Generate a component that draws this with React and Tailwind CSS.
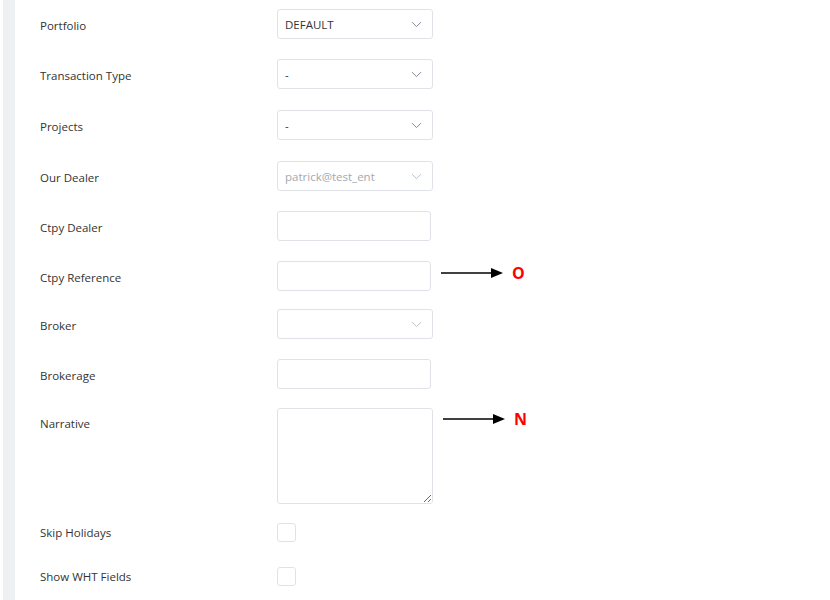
import { ChevronDown } from 'lucide-react';

const labelCls = 'w-[237px] shrink-0 text-[11.5px] text-[#333]';

const Select = ({ value, muted }) => (
  <div className="w-[156px] h-[30px] border border-[#dfe3e8] rounded-[3px] bg-white flex items-center justify-between pl-[7px] pr-[7px]">
    <span className={muted ? 'text-[11.5px] text-[#a3a9b0] translate-y-[1px]' : 'text-[11.5px] text-[#333] translate-y-[1px]'}>{value}</span>
    <ChevronDown size={17} strokeWidth={1.4} className={muted ? 'text-[#b8c0c8]' : 'text-[#7d8a98]'} />
  </div>
);

const Input = () => (
  <div className="w-[154px] h-[30px] border border-[#dfe3e8] rounded-[3px] bg-white" />
);

const Checkbox = () => (
  <div className="w-[19px] h-[19px] border border-[#dfe3e8] rounded-[3px] bg-white" />
);

const Marker = ({ letter, className }) => (
  <div className={'flex items-center ml-[10px] ' + (className || '')}>
    <svg width="62" height="12" viewBox="0 0 62 12">
      <line x1="0" y1="6" x2="52" y2="6" stroke="#000" strokeWidth="1.5" />
      <polygon points="50,1 62,6 50,11" fill="#000" />
    </svg>
    <span className="ml-[9px] text-[16px] font-bold text-[#ff0000] leading-none">{letter}</span>
  </div>
);

const Row = ({ label, children, className, flat }) => (
  <div className={'flex items-center ' + (className || '')}>
    <div className={flat ? labelCls : labelCls + ' translate-y-[2px]'}>{label}</div>
    {children}
  </div>
);

export default function App() {
  return (
    <div className="flex w-full h-[600px] bg-white overflow-hidden" style={{ fontFamily: '"Open Sans", "Liberation Sans", sans-serif' }}>
      <div className="ml-[3px] w-[12px] shrink-0 bg-[#eef1f4]" />
      <div className="pl-[25px] pt-[9px] flex flex-col">
        <Row label="Portfolio"><Select value="DEFAULT" /></Row>
        <Row label="Transaction Type" className="mt-[20px]"><Select value="-" /></Row>
        <Row label="Projects" className="mt-[21px]"><Select value="-" /></Row>
        <Row label="Our Dealer" className="mt-[21px]"><Select value="patrick@test_ent" muted /></Row>
        <Row label="Ctpy Dealer" className="mt-[20px]"><Input /></Row>
        <Row label="Ctpy Reference" className="mt-[20px]"><Input /><Marker letter="O" className="-mt-[6px]" /></Row>
        <Row label="Broker" className="mt-[18px]"><Select value="" muted /></Row>
        <Row label="Brokerage" className="mt-[20px]"><Input /></Row>
        <div className="flex items-start mt-[19px]">
          <div className={labelCls + ' pt-[7px]'}>Narrative</div>
          <textarea className="w-[156px] h-[96px] border border-[#dfe3e8] rounded-[3px] bg-white resize-y outline-none" />
          <Marker letter="N" className="mt-[3px]" />
        </div>
        <Row label="Skip Holidays" className="mt-[19px]" flat><Checkbox /></Row>
        <Row label="Show WHT Fields" className="mt-[25px]" flat><Checkbox /></Row>
      </div>
    </div>
  );
}
